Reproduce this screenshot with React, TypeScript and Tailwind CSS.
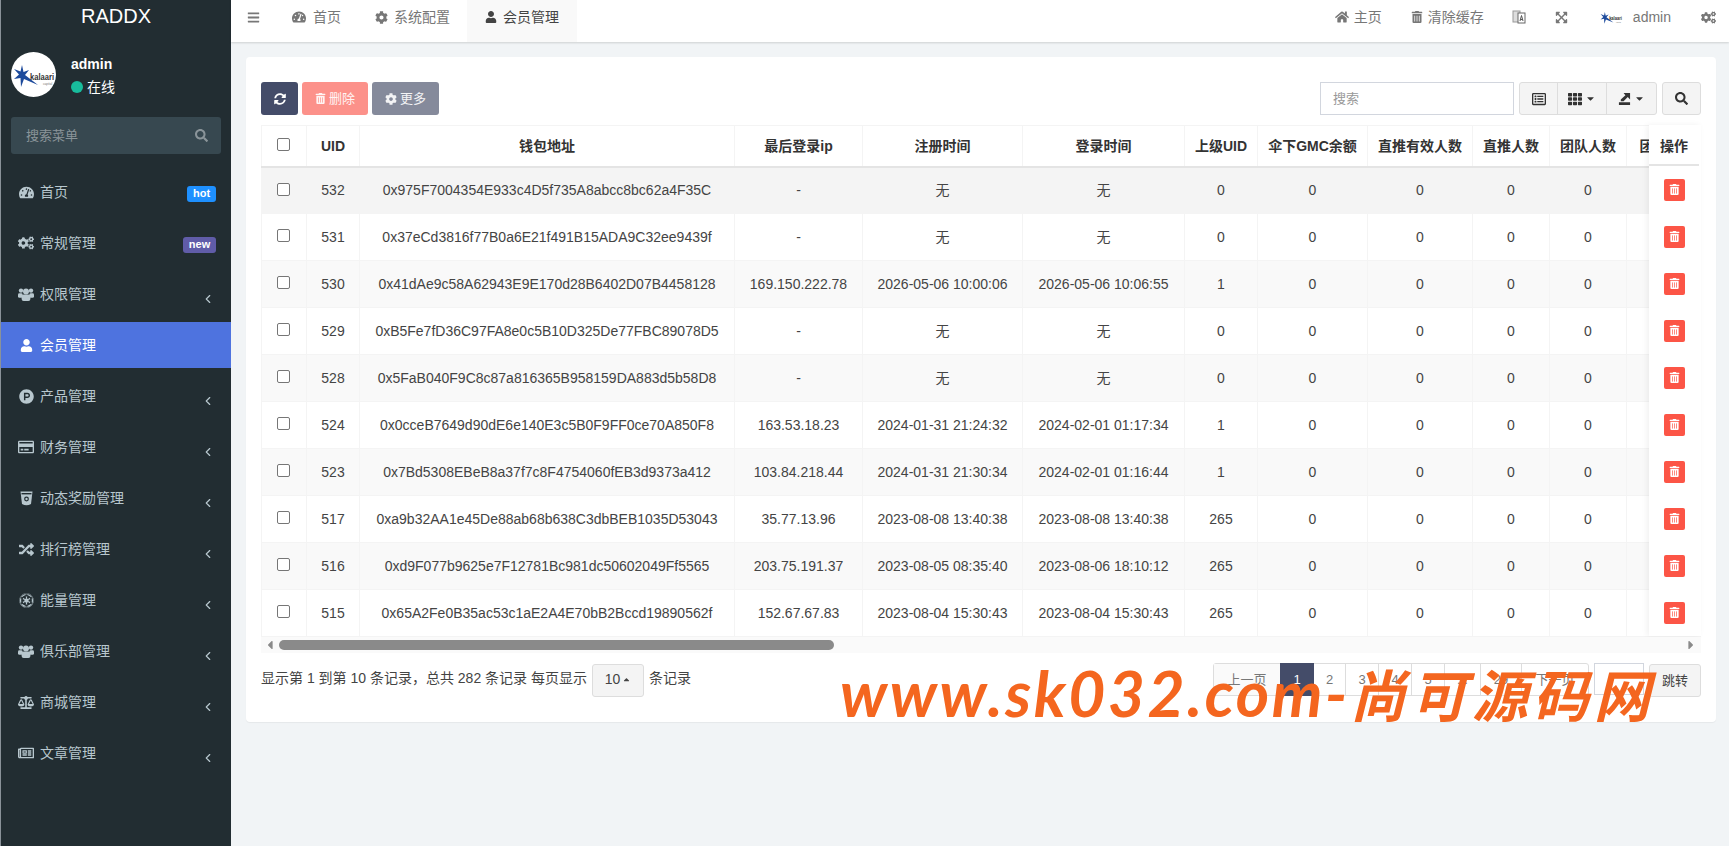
import React from "react";
import {
  FaTachometerAlt, FaCogs, FaUser, FaProductHunt, FaRegCreditCard, FaRandom, FaEmpire,
  FaBalanceScale, FaRegNewspaper, FaBars, FaCog, FaHome, FaTrashAlt, FaSyncAlt, FaExpandArrowsAlt,
  FaRegListAlt, FaTh, FaSearch, FaCaretDown, FaCaretUp, FaCaretLeft, FaCaretRight,
} from "react-icons/fa";
import { ChevronLeft } from "lucide-react";

const sans = "font-['Liberation_Sans','Noto_Sans_CJK_SC',sans-serif]";

function Logo({ small }: { small?: boolean }) {
  return (
    <svg viewBox="0 0 45 45" className={small ? "w-[24px] h-[24px]" : "w-[45px] h-[45px]"}>
      {!small && <circle cx="22.5" cy="22.5" r="22.5" fill="#fff" />}
      <path d="M11 13 L12.5 20 L18 18 L14 23 L27 33 L13 27 L10 35 L9.5 26 L3 27 L8 22.5 L3 17 L9.5 19.5 Z" fill="#1c4a9c" />
      <text x="19" y="28" fontSize="8.5" fontWeight="700" fill="#333" textLength="24" lengthAdjust="spacingAndGlyphs" fontFamily="Liberation Sans, sans-serif">kalaari</text>
      <text x="32" y="33" fontSize="3.2" fill="#777" fontFamily="Liberation Sans, sans-serif">capital</text>
    </svg>
  );
}

function CupIcon() {
  return (
    <svg viewBox="0 0 13 15" className="w-[13px] h-[15px]">
      <path d="M0.5 0.5 H12.5 L11 13 Q6.5 15.5 2 13 Z" fill="#b8c7ce" />
      <rect x="1.5" y="2" width="10" height="1.4" fill="#222d32" />
      <circle cx="6.5" cy="8" r="2.4" fill="#222d32" />
      <circle cx="6.5" cy="8" r="1.2" fill="#b8c7ce" />
    </svg>
  );
}

function UsersIcon() {
  return (
    <svg viewBox="0 0 16 13" className="w-[16px] h-[13px]" fill="currentColor">
      <circle cx="3" cy="2.6" r="2.2" />
      <circle cx="13" cy="2.6" r="2.2" />
      <rect x="0" y="5.2" width="4.6" height="4.6" rx="1.4" />
      <rect x="11.4" y="5.2" width="4.6" height="4.6" rx="1.4" />
      <circle cx="8" cy="3.4" r="3" />
      <rect x="3.6" y="6.6" width="8.8" height="6.4" rx="2" />
    </svg>
  );
}

const menu: { label: string; icon: React.ReactNode; badge?: string; active?: boolean; arrow?: boolean }[] = [
  { label: "首页", icon: <FaTachometerAlt size={15} />, badge: "hot" },
  { label: "常规管理", icon: <FaCogs size={16} />, badge: "new" },
  { label: "权限管理", icon: <UsersIcon />, arrow: true },
  { label: "会员管理", icon: <FaUser size={13} />, active: true },
  { label: "产品管理", icon: <FaProductHunt size={15} />, arrow: true },
  { label: "财务管理", icon: <FaRegCreditCard size={16} />, arrow: true },
  { label: "动态奖励管理", icon: <CupIcon />, arrow: true },
  { label: "排行榜管理", icon: <FaRandom size={15} />, arrow: true },
  { label: "能量管理", icon: <FaEmpire size={15} />, arrow: true },
  { label: "俱乐部管理", icon: <UsersIcon />, arrow: true },
  { label: "商城管理", icon: <FaBalanceScale size={17} />, arrow: true },
  { label: "文章管理", icon: <FaRegNewspaper size={16} />, arrow: true },
];

const rows = [
  ["532", "0x975F7004354E933c4D5f735A8abcc8bc62a4F35C", "-", "无", "无", "0"],
  ["531", "0x37eCd3816f77B0a6E21f491B15ADA9C32ee9439f", "-", "无", "无", "0"],
  ["530", "0x41dAe9c58A62943E9E170d28B6402D07B4458128", "169.150.222.78", "2026-05-06 10:00:06", "2026-05-06 10:06:55", "1"],
  ["529", "0xB5Fe7fD36C97FA8e0c5B10D325De77FBC89078D5", "-", "无", "无", "0"],
  ["528", "0x5FaB040F9C8c87a816365B958159DA883d5b58D8", "-", "无", "无", "0"],
  ["524", "0x0cceB7649d90dE6e140E3c5B0F9FF0ce70A850F8", "163.53.18.23", "2024-01-31 21:24:32", "2024-02-01 01:17:34", "1"],
  ["523", "0x7Bd5308EBeB8a37f7c8F4754060fEB3d9373a412", "103.84.218.44", "2024-01-31 21:30:34", "2024-02-01 01:16:44", "1"],
  ["517", "0xa9b32AA1e45De88ab68b638C3dbBEB1035D53043", "35.77.13.96", "2023-08-08 13:40:38", "2023-08-08 13:40:38", "265"],
  ["516", "0xd9F077b9625e7F12781Bc981dc50602049Ff5565", "203.75.191.37", "2023-08-05 08:35:40", "2023-08-06 18:10:12", "265"],
  ["515", "0x65A2Fe0B35ac53c1aE2A4E70bB2Bccd19890562f", "152.67.67.83", "2023-08-04 15:30:43", "2023-08-04 15:30:43", "265"],
];

const heads = ["UID", "钱包地址", "最后登录ip", "注册时间", "登录时间", "上级UID", "伞下GMC余额", "直推有效人数", "直推人数", "团队人数", "团队有效人数"];
const widths = ["w-[45px]", "w-[53px]", "w-[375px]", "w-[128px]", "w-[160px]", "w-[162px]", "w-[73px]", "w-[110px]", "w-[105px]", "w-[77px]", "w-[77px]", "w-[110px]"];

function Box() {
  return <span className="inline-block w-[13px] h-[13px] rounded-[2px] border border-[#767676] bg-white align-middle -translate-x-[1px] -translate-y-[2px]" />;
}

export default function App() {
  return (
    <div className={`${sans} relative w-full h-[846px] overflow-hidden flex bg-[#f1f4f6] text-[14px] text-[#444c5a]`}>
      <aside className="w-[231px] h-full shrink-0 bg-[#222d32] border-l border-[#8a9299] flex flex-col">
        <div className="h-[32px] flex items-center justify-center text-white text-[20px]">RADDX</div>
        <div className="flex items-center pl-[10px] pt-[20px] h-[65px]">
          <Logo />
          <div className="ml-[15px] mt-[1px]">
            <div className="font-bold text-white text-[14px] leading-[18px]">admin</div>
            <div className="flex items-center text-white text-[14px] leading-[18px] mt-[5px]">
              <span className="w-[12px] h-[12px] rounded-full bg-[#18bc9c] mr-[4px]" />在线
            </div>
          </div>
        </div>
        <div className="mx-[10px] mt-[20px] h-[37px] rounded-[3px] bg-[#374850] flex items-center justify-between pl-[15px] pr-[13px] text-[#8a9499] text-[13px]">
          <span>搜索菜单</span>
          <FaSearch size={13} />
        </div>
        <nav className="mt-[15px]">
          {menu.map((m) => (
            <div key={m.label} className={`h-[46px] mb-[5px] last:mb-0 relative flex items-center pl-[17px] pr-[15px] text-[14px] ${m.active ? "bg-[#4e73df] text-white" : "text-[#b8c7ce]"}`}>
              <span className="w-[16px] flex justify-center shrink-0">{m.icon}</span>
              <span className="ml-[6px] flex-1">{m.label}</span>
              {m.badge === "hot" && <span className="mt-[3px] w-[29px] h-[16px] rounded-[3px] bg-[#1e90ff] text-white text-[11px] font-bold flex items-center justify-center">hot</span>}
              {m.badge === "new" && <span className="mt-[3px] w-[33px] h-[16px] rounded-[3px] bg-[#605ca8] text-white text-[11px] font-bold flex items-center justify-center">new</span>}
              {m.arrow && <ChevronLeft size={14} strokeWidth={2} className="mt-[9px] mr-[1px]" />}
            </div>
          ))}
        </nav>
      </aside>

      <main className="flex-1 min-w-0 flex flex-col">
        <header className="h-[42px] bg-white shadow-[0_1px_2px_rgba(0,0,0,0.15)] flex items-center text-[14px] text-[#777] relative">
          <span className="w-[44px] h-full pb-[8px] flex items-center justify-center"><FaBars size={13} /></span>
          <div className="flex h-full items-center">
            <span className="h-full flex items-center px-[17px] pb-[8px]"><FaTachometerAlt size={14} className="mr-[7px]" />首页</span>
            <span className="h-full flex items-center px-[17px] pb-[8px]"><FaCog size={13} className="mr-[6px]" />系统配置</span>
            <span className="h-full flex items-center px-[18px] pb-[8px] bg-[#f9f9f9] text-[#444]"><FaUser size={12} className="mr-[6px]" />会员管理</span>
          </div>
          <div className="ml-auto h-full flex items-center pr-[13px] pb-[8px]">
            <span className="flex items-center mr-[29px]"><FaHome size={14} className="mr-[5px]" />主页</span>
            <span className="flex items-center mr-[28px]"><FaTrashAlt size={12} className="mr-[5px]" />清除缓存</span>
            <svg viewBox="0 0 14 14" className="w-[14px] h-[14px] mr-[29px]">
              <rect x="1" y="1" width="7" height="11" fill="#ddd" stroke="#999" strokeWidth="1" />
              <rect x="6" y="3" width="7" height="10" fill="#fff" stroke="#666" strokeWidth="1" />
              <path d="M8 11 L9.5 5.5 L11 11 M8.5 9.5 H10.5" stroke="#555" fill="none" strokeWidth="1" />
            </svg>
            <FaExpandArrowsAlt size={13} className="mr-[31px]" />
            <Logo small />
            <span className="ml-[10px] mr-[30px]">admin</span>
            <FaCogs size={15} />
          </div>
        </header>

        <section className="ml-[15px] mr-[13px] mt-[15px] h-[665px] rounded-[4px] bg-white shadow-[0_1px_1px_rgba(0,0,0,0.05)] px-[15px] pt-[25px] relative">
          <div className="flex items-start h-[33px]">
            <button className="w-[37px] h-[33px] rounded-[3px] bg-[#444c69] text-white flex items-center justify-center"><FaSyncAlt size={12} /></button>
            <button className="ml-[4px] w-[66px] h-[33px] rounded-[3px] bg-[#fc918a] text-white/90 flex items-center justify-center text-[13px]"><FaTrashAlt size={11} className="mr-[3px]" />删除</button>
            <button className="ml-[4px] w-[67px] h-[33px] rounded-[3px] bg-[#858a9b] text-white/90 flex items-center justify-center text-[13px]"><FaCog size={12} className="mr-[3px]" />更多</button>
            <div className="ml-auto flex">
              <div className="w-[194px] h-[33px] border border-[#d2d6de] flex items-center pl-[12px] text-[13px] text-[#999]">搜索</div>
              <div className="ml-[5px] h-[33px] flex rounded-[3px] border border-[#ddd] bg-[#f4f4f4] text-[#333]">
                <span className="w-[38px] flex items-center justify-center border-r border-[#ddd]"><FaRegListAlt size={14} /></span>
                <span className="w-[49px] flex items-center justify-center border-r border-[#ddd]"><FaTh size={14} /><FaCaretDown size={11} className="ml-[3px]" /></span>
                <span className="w-[49px] flex items-center justify-center">
                  <svg viewBox="0 0 14 14" className="w-[13px] h-[13px]"><path d="M6 1 L13 1 L13 8 L10.5 5.5 L6 10 L3 10 L3 8 L8 3.5 Z M1 11 H13 V14 H1 Z" fill="#333" /></svg>
                  <FaCaretDown size={11} className="ml-[3px]" />
                </span>
              </div>
              <div className="ml-[5px] w-[39px] h-[33px] rounded-[3px] border border-[#ddd] bg-[#f4f4f4] flex items-center justify-center text-[#333]"><FaSearch size={13} /></div>
            </div>
          </div>

          <div className="relative mt-[10px]">
            <div className="overflow-hidden">
              <table className="table-fixed border-collapse w-[1475px] text-center text-[#444] text-[14px]">
                <colgroup>
                  {widths.map((w, i) => <col key={i} className={w} />)}
                </colgroup>
                <thead>
                  <tr className="h-[41px] border-b-2 border-[#e4e4e4]">
                    <th className="border border-b-0 border-[#f4f4f4] font-normal"><Box /></th>
                    {heads.map((h) => <th key={h} className="border border-b-0 border-[#f4f4f4] pt-[2px] font-bold text-[#333] whitespace-nowrap overflow-hidden">{h}</th>)}
                  </tr>
                </thead>
                <tbody>
                  {rows.map((r, i) => (
                    <tr key={r[0]} className={`h-[47px] ${i === 0 ? "bg-[#f4f4f4]" : i % 2 === 0 ? "bg-[#f9f9f9]" : "bg-white"}`}>
                      <td className="border border-[#f4f4f4]"><Box /></td>
                      {r.map((c, j) => <td key={j} className="border border-[#f4f4f4] whitespace-nowrap">{c}</td>)}
                      {["0", "0", "0", "0", "0"].map((c, j) => <td key={j} className="border border-[#f4f4f4]">{c}</td>)}
                    </tr>
                  ))}
                </tbody>
              </table>
            </div>
            <div className="absolute right-0 top-0 w-[52px] pr-[2px] bg-white shadow-[-2px_0_6px_rgba(0,0,0,0.06)]">
              <div className="h-[41px] pt-[3px] flex items-center justify-center font-bold text-[14px] text-[#333] border-b-2 border-[#e4e4e4]">操作</div>
              {rows.map((r) => (
                <div key={r[0]} className="h-[47px] flex items-center justify-center">
                  <span className="w-[21px] h-[22px] rounded-[2px] bg-[#fc5546] text-white flex items-center justify-center"><FaTrashAlt size={11} /></span>
                </div>
              ))}
            </div>
            <div className="h-[16px] bg-[#fafafa] flex items-center relative">
              <FaCaretLeft size={14} className="text-[#8a8a8a] ml-[2px]" />
              <div className="absolute left-[18px] w-[555px] h-[10px] rounded-full bg-[#8a8a8a]" />
              <FaCaretRight size={14} className="text-[#8a8a8a] ml-auto mr-[3px]" />
            </div>
          </div>

          <div className="mt-[11px] flex items-start">
            <div className="flex items-start h-[33px] text-[14px] leading-[29px] text-[#444]">
              显示第 1 到第 10 条记录，总共 282 条记录 每页显示
              <span className="mx-[5px] w-[52px] h-[33px] pb-[3px] rounded-[3px] border border-[#ddd] bg-[#f4f4f4] flex items-center justify-center">10<FaCaretUp size={9} className="ml-[2px]" /></span>
              条记录
            </div>
            <div className="ml-auto flex items-start text-[13px]">
              <div className="flex h-[33px] mt-[-1px] rounded-[3px] border border-[#ddd] text-[#777] items-stretch">
                <span className="w-[66px] flex items-center justify-center bg-[#fafafa]">上一页</span>
                <span className="w-[34px] flex items-center justify-center bg-[#444c69] text-white mt-[-1px] mb-[-1px]">1</span>
                {["2", "3", "4", "5", "...", "29"].map((p, i) => (
                  <span key={p} className={`flex items-center justify-center border-r border-[#ddd] ${i === 0 ? "w-[32px]" : i === 4 ? "w-[36px]" : i === 5 ? "w-[41px]" : "w-[33px]"}`}>{p}</span>
                ))}
                <span className="w-[66px] flex items-center justify-center">下一页</span>
              </div>
              <div className="ml-[5px] w-[50px] h-[32px] mt-[-1px] border border-[#d2d6de]" />
              <div className="ml-[5px] w-[52px] h-[33px] rounded-[3px] border border-[#ddd] bg-[#f4f4f4] flex items-center justify-center text-[#444]">跳转</div>
            </div>
          </div>
        </section>
      </main>

      <div className="absolute left-[840px] top-[661px] text-[#f4661f] text-[64px] leading-none whitespace-nowrap italic font-['Lato','Noto_Sans_CJK_SC',sans-serif] font-bold tracking-[2.5px]">
        www.sk032.com-<span className="text-[56px] tracking-[5px]">尚可源码网</span>
      </div>
    </div>
  );
}
